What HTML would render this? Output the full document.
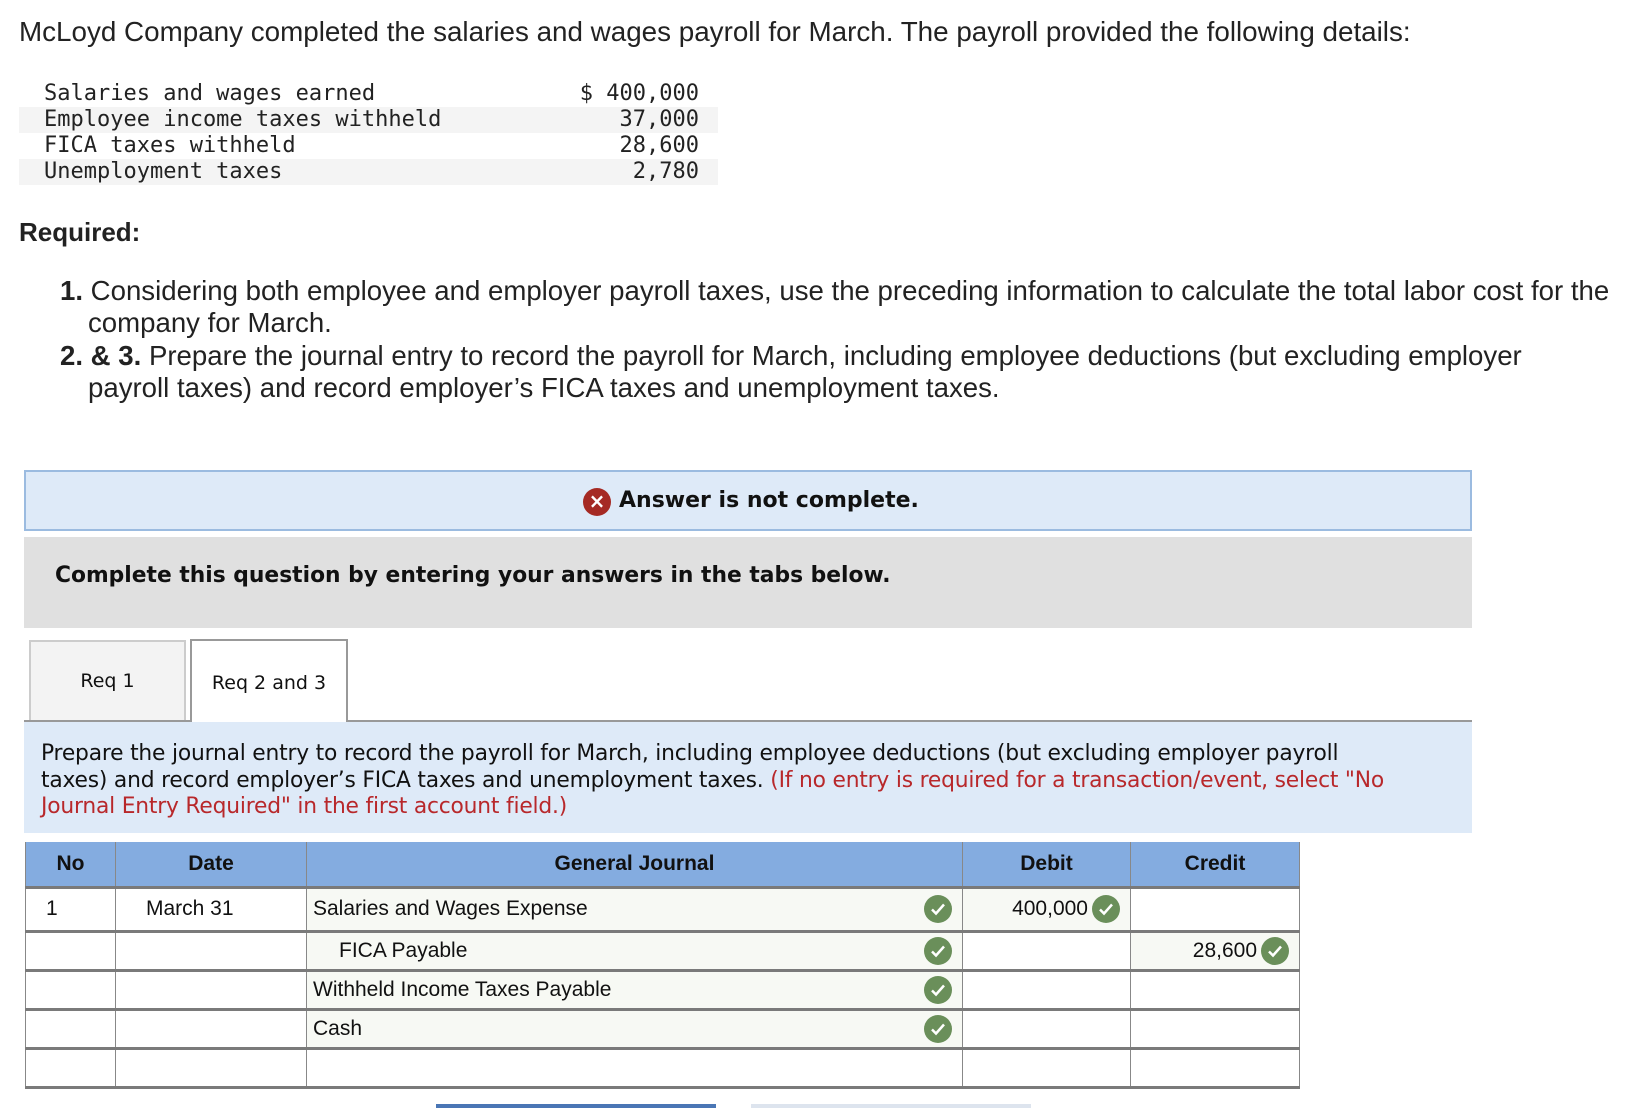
<!DOCTYPE html>
<html><head><meta charset="utf-8"><style>
*{margin:0;padding:0;box-sizing:border-box}
body{width:1652px;height:1108px;background:#fff;font-family:"Liberation Sans",Arial,sans-serif;color:#222;position:relative;overflow:hidden}
.a{position:absolute;white-space:nowrap}
.p{font-size:27.6px}
.mono{font-family:"DejaVu Sans Mono","Liberation Mono",monospace;font-size:22px;color:#222}
.row{position:absolute;left:19px;width:699px;height:26px}
.v{font-family:"DejaVu Sans",Verdana,sans-serif}
table{position:absolute;left:25px;top:842px;border-collapse:collapse;table-layout:fixed;width:1274px;font-size:21px;font-family:"Liberation Sans",Arial,sans-serif;color:#111}
td,th{border-left:1px solid #888;border-right:1px solid #888;border-bottom:3px solid #7a7a7a;padding:0 6px;position:relative}
th{background:#84ace0;font-weight:bold;text-align:center;height:45px}
.acc{background:#f7f9f4}
.ck{position:absolute;width:28px;height:28px;border-radius:50%;background:#6a8f5a;top:50%;margin-top:-14px}
.ck svg{position:absolute;left:0;top:0}
.ind{padding-left:28px}
</style></head><body>
<div class="a p" style="left:19px;top:16px;font-size:27.8px">McLoyd Company completed the salaries and wages payroll for March. The payroll provided the following details:</div>

<div class="row" style="top:81px"></div>
<div class="row" style="top:107px;background:#f4f4f4"></div>
<div class="row" style="top:133px"></div>
<div class="row" style="top:159px;background:#f4f4f4"></div>
<div class="a mono" style="left:44px;top:81px;line-height:26px">Salaries and wages earned<br>Employee income taxes withheld<br>FICA taxes withheld<br>Unemployment taxes</div>
<div class="a mono" style="left:500px;width:199px;top:81px;line-height:26px;text-align:right">$ 400,000<br>37,000<br>28,600<br>2,780</div>

<div class="a p" style="left:19px;top:217px;font-weight:bold;font-size:26px">Required:</div>
<div class="a p" style="left:60px;top:275px;line-height:32.3px">
<div><b>1.</b> Considering both employee and employer payroll taxes, use the preceding information to calculate the total labor cost for the</div>
<div class="ind">company for March.</div>
<div><b>2. &amp; 3.</b> Prepare the journal entry to record the payroll for March, including employee deductions (but excluding employer</div>
<div class="ind">payroll taxes) and record employer’s FICA taxes and unemployment taxes.</div>
</div>

<div class="a" style="left:24px;top:470px;width:1448px;height:61px;background:#deeaf8;border:2px solid #9bbbe0"></div>
<div class="a" style="left:583px;top:488px;width:28px;height:28px;border-radius:50%;background:#a52a24;color:#fff;text-align:center;font:bold 20px/27px 'DejaVu Sans',sans-serif">×</div>
<div class="a v" style="left:619px;top:488px;font-size:22px;font-weight:bold;color:#111">Answer is not complete.</div>

<div class="a" style="left:24px;top:537px;width:1448px;height:91px;background:#e0e0e0"></div>
<div class="a v" style="left:55px;top:563px;font-size:21.8px;font-weight:bold;color:#111">Complete this question by entering your answers in the tabs below.</div>

<div class="a v" style="left:29px;top:640px;width:157px;height:82px;background:#f3f3f3;border:2px solid #ccc;border-bottom:none;text-align:center;font-size:19px;line-height:78px;color:#111">Req 1</div>
<div class="a v" style="left:190px;top:639px;width:158px;height:84px;background:#fff;border:2px solid #999;border-bottom:none;text-align:center;font-size:19px;line-height:84px;color:#111">Req 2 and 3</div>
<div class="a" style="left:24px;top:720px;width:166px;height:2px;background:#999"></div>
<div class="a" style="left:348px;top:720px;width:1124px;height:2px;background:#999"></div>

<div class="a" style="left:24px;top:722px;width:1448px;height:111px;background:#deeaf8"></div>
<div class="a v" style="left:41px;top:741px;font-size:21.8px;line-height:26.5px;color:#111;letter-spacing:-0.2px">Prepare the journal entry to record the payroll for March, including employee deductions (but excluding employer payroll<br>taxes) and record employer’s FICA taxes and unemployment taxes. <span style="color:#b8282b">(If no entry is required for a transaction/event, select "No</span><br><span style="color:#b8282b">Journal Entry Required" in the first account field.)</span></div>

<table>
<colgroup><col style="width:90px"><col style="width:191px"><col style="width:656px"><col style="width:168px"><col style="width:169px"></colgroup>
<tr><th>No</th><th>Date</th><th>General Journal</th><th>Debit</th><th>Credit</th></tr>
<tr style="height:44px"><td style="padding-left:20px">1</td><td style="padding-left:30px">March 31</td><td class="acc">Salaries and Wages Expense<span class="ck" style="left:617px"><svg width="28" height="28"><path d="M8 14.5l4 4 8-9" stroke="#fff" stroke-width="2.5" fill="none"/></svg></span></td><td class="acc" style="text-align:right;padding-right:42px">400,000<span class="ck" style="right:10px"><svg width="28" height="28"><path d="M8 14.5l4 4 8-9" stroke="#fff" stroke-width="2.5" fill="none"/></svg></span></td><td></td></tr>
<tr style="height:39px"><td></td><td></td><td class="acc" style="padding-left:32px">FICA Payable<span class="ck" style="left:617px"><svg width="28" height="28"><path d="M8 14.5l4 4 8-9" stroke="#fff" stroke-width="2.5" fill="none"/></svg></span></td><td></td><td class="acc" style="text-align:right;padding-right:42px">28,600<span class="ck" style="right:10px"><svg width="28" height="28"><path d="M8 14.5l4 4 8-9" stroke="#fff" stroke-width="2.5" fill="none"/></svg></span></td></tr>
<tr style="height:39px"><td></td><td></td><td class="acc">Withheld Income Taxes Payable<span class="ck" style="left:617px"><svg width="28" height="28"><path d="M8 14.5l4 4 8-9" stroke="#fff" stroke-width="2.5" fill="none"/></svg></span></td><td></td><td></td></tr>
<tr style="height:39px"><td></td><td></td><td class="acc">Cash<span class="ck" style="left:617px"><svg width="28" height="28"><path d="M8 14.5l4 4 8-9" stroke="#fff" stroke-width="2.5" fill="none"/></svg></span></td><td></td><td></td></tr>
<tr style="height:39px"><td></td><td></td><td></td><td></td><td></td></tr>
</table>

<div class="a" style="left:436px;top:1104px;width:280px;height:4px;background:#4a76b5"></div>
<div class="a" style="left:751px;top:1104px;width:280px;height:4px;background:#dde4ee"></div>
</body></html>
